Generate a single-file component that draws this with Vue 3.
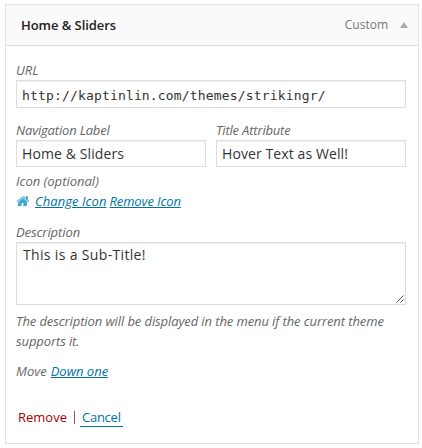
<script setup>
import { ref } from 'vue'

const url = ref('http://kaptinlin.com/themes/strikingr/')
const label = ref('Home & Sliders')
const title = ref('Hover Text as Well!')
const description = ref('This is a Sub-Title!')
</script>

<template>
  <section class="menu-item">
    <header class="bar">
      <span class="item-title">Home &amp; Sliders</span>
      <span class="item-type">Custom</span>
      <svg class="toggle" width="8" height="6" viewBox="0 0 8 6"><path d="M4 0 8 6H0z" fill="#aaa" /></svg>
    </header>
    <div class="settings">
      <label class="field">
        <span class="caption c-url">URL</span>
        <input v-model="url" class="control code" type="text" spellcheck="false" />
      </label>
      <div class="columns">
        <label class="field">
          <span class="caption c-nav">Navigation Label</span>
          <input v-model="label" class="control t-nav" type="text" />
        </label>
        <label class="field">
          <span class="caption c-title">Title Attribute</span>
          <input v-model="title" class="control t-title" type="text" />
        </label>
      </div>
      <div class="caption icon-caption">Icon (optional)</div>
      <div class="icon-row">
        <svg class="home" width="13" height="10" viewBox="0 0 13 10" fill="#3aa8d0">
          <g transform="translate(1.2 0) skewX(-8)">
            <path d="M6.5 2 11 5.8V9.4Q11 10 10.4 10H7.4V7H5.6V10H2.6Q2 10 2 9.4V5.8z" />
            <path d="M0 5.2 5.8.4Q6.5-.1 7.2.4L9 1.9V.3H11V3.5L13 5.2 12.4 6 6.5 1.3.6 6z" />
          </g>
        </svg>
        <a class="link change">Change Icon</a>
        <a class="link remove-icon">Remove Icon</a>
      </div>
      <label class="field desc-field">
        <span class="caption c-desc">Description</span>
        <span class="area-wrap">
          <textarea v-model="description" class="control area" spellcheck="false"></textarea>
          <svg class="grip" width="8" height="8" viewBox="0 0 8 8"><path d="M.5 7.5l7-7M4.5 7.5l3-3" stroke="#555" stroke-width="1" /></svg>
        </span>
      </label>
      <p class="help">The description will be displayed in the menu if the current theme<br />supports it.</p>
      <p class="move"><span>Move</span><a class="link down">Down one</a></p>
      <div class="actions">
        <a class="remove">Remove</a>
        <span class="sep"></span>
        <a class="cancel">Cancel</a>
      </div>
    </div>
  </section>
</template>

<style>
body {
  background: #fff;
}
</style>

<style scoped>
.menu-item {
  box-sizing: border-box;
  width: 414px;
  height: 440px;
  margin: 4px 0 0 5px;
  border: 1px solid #e1e1e1;
  box-shadow: 0 1px 1px rgba(0, 0, 0, 0.04);
  font: 13px/20px "Open Sans", sans-serif;
  color: #666;
  white-space: nowrap;
}
.bar {
  display: flex;
  align-items: center;
  height: 40px;
  padding: 0 10px 0 15px;
  background: #fafafa;
  border-bottom: 1px solid #dfdfdf;
}
.item-title {
  flex: 1;
  font-weight: 600;
  letter-spacing: -0.06px;
  color: #222;
}
.item-type {
  color: #777;
  font-size: 12px;
  margin-right: 12px;
}
.settings {
  padding: 14px 12px 0 10px;
}
.field {
  display: flex;
  flex-direction: column;
}
.caption {
  height: 20px;
  font-style: italic;
}
.c-nav,
.c-title {
  letter-spacing: -0.18px;
}
.c-desc {
  letter-spacing: -0.08px;
}
.control {
  box-sizing: border-box;
  display: block;
  width: 100%;
  height: 27px;
  margin: 0;
  padding: 0 5px;
  border: 1px solid #ddd;
  border-radius: 0;
  box-shadow: inset 0 1px 2px rgba(0, 0, 0, 0.07);
  background: #fff;
  color: #333;
  font: 14px/20px "Open Sans", sans-serif;
  outline: 0;
}
.t-nav,
.t-title {
  letter-spacing: 0.1px;
}
.code {
  height: 28px;
  padding-top: 2px;
  font: 13px/20px "DejaVu Sans Mono", monospace;
  letter-spacing: 0.165px;
}
.columns {
  display: grid;
  grid-template-columns: 190px 190px;
  gap: 10px;
  margin-top: 12px;
}
.icon-caption {
  margin-top: 4px;
}
.icon-row {
  display: flex;
  align-items: center;
  height: 20px;
}
.home {
  margin-right: 6px;
}
.link {
  font-style: italic;
  color: #0074a2;
  text-decoration: underline;
}
.change {
  letter-spacing: 0.06px;
  margin-right: 3px;
}
.remove-icon {
  letter-spacing: -0.12px;
}
.desc-field {
  margin-top: 11px;
}
.area-wrap {
  position: relative;
}
.area {
  height: 63px;
  padding: 2px 6px;
  letter-spacing: 0.34px;
  resize: none;
  overflow: hidden;
}
.grip {
  position: absolute;
  right: 2px;
  bottom: 2px;
}
.help {
  margin: 6px 0 0;
  font-style: italic;
  letter-spacing: -0.1px;
}
.move {
  display: flex;
  gap: 4px;
  margin: 10px 0 0;
  font-style: italic;
}
.actions {
  display: flex;
  align-items: flex-start;
  margin-top: 26px;
  padding-left: 2px;
}
.remove {
  color: #a00;
}
.sep {
  width: 1px;
  height: 13px;
  margin: 4px 5px 0 7px;
  background: #86538c;
}
.cancel {
  height: 19px;
  padding: 0 2px;
  border-bottom: 1px solid #0074a2;
  color: #0074a2;
  letter-spacing: -0.25px;
}
</style>
